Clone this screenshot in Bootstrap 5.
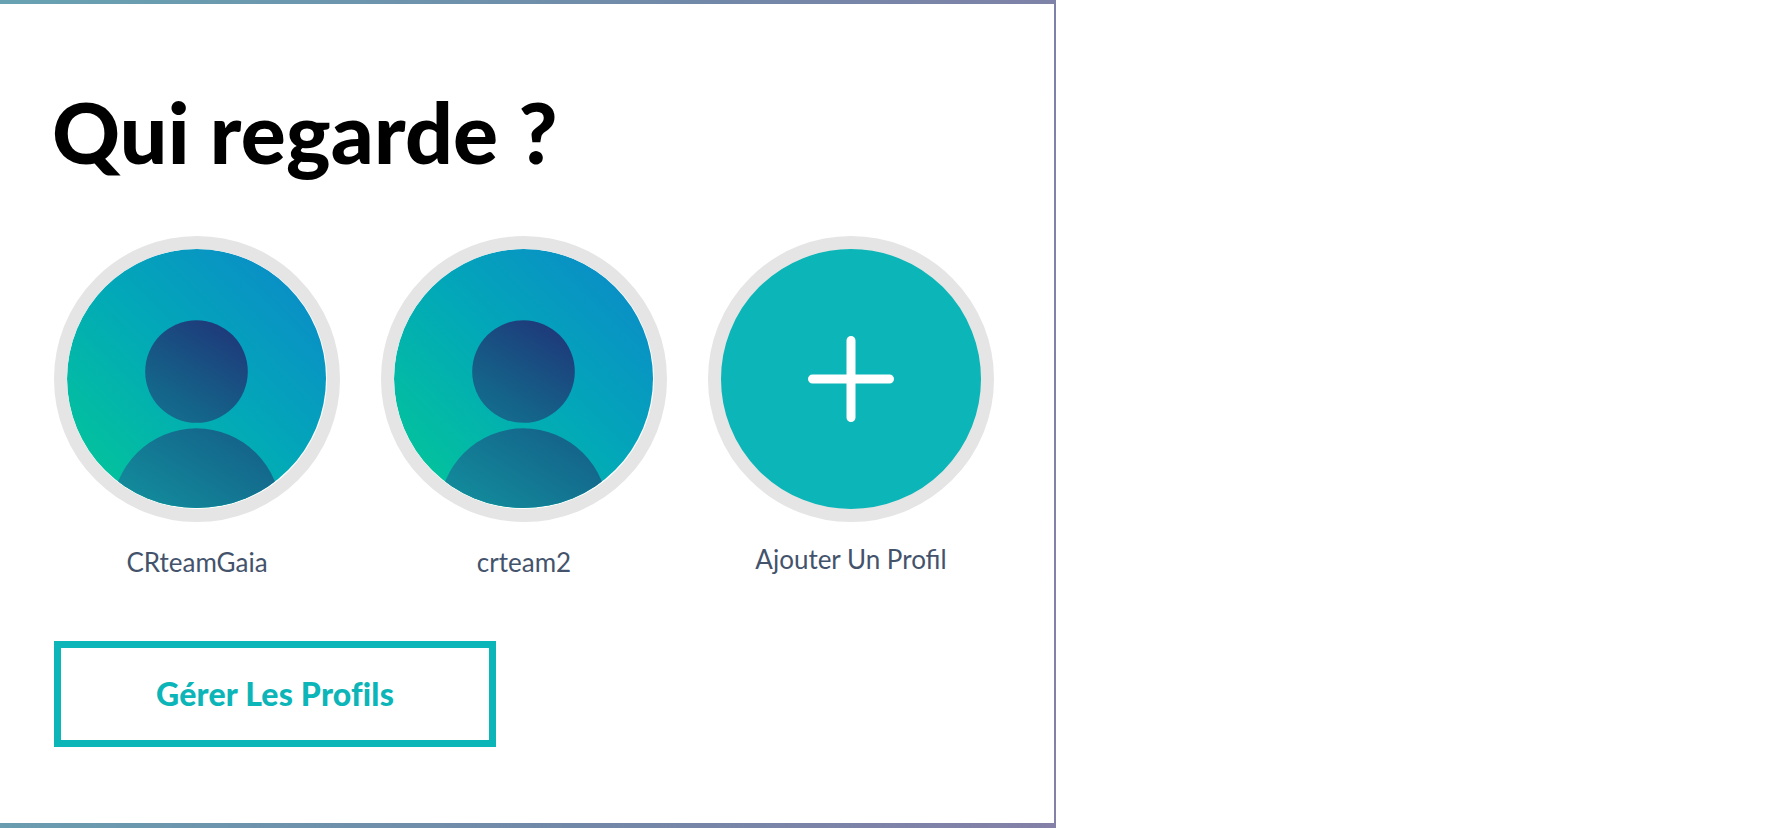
<!DOCTYPE html>
<html lang="fr">
<head>
<meta charset="utf-8">
<title>Qui regarde ?</title>
<link href="https://cdn.jsdelivr.net/npm/bootstrap@5.3.0/dist/css/bootstrap.min.css" rel="stylesheet">
<style>
html, body { height: 100%; background: #fff; }
body { font-family: "Lato", "Liberation Sans", sans-serif; }
.who-panel {
  width: 1056px; height: 828px; background: #fff;
  border-style: solid; border-width: 4.5px 2px 5px 0;
  border-image: linear-gradient(100deg, #68a2b2 0%, #7288a8 60%, #8480a8 100%) 1;
  padding: 83px 0 0 54px;
}
.who-title { font-size: 84px; font-weight: 900; color: #000; line-height: 90px; margin: 0 0 59px -2px; letter-spacing: .2px; }
.who-row { gap: 41px; }
.who-item { width: 286px; }
.who-ring { width: 286px; height: 286px; border: 13.5px solid #e5e5e5; border-radius: 50%; overflow: hidden; }
.who-ring svg { display: block; width: 259px; height: 259px; }
.who-add { background: #0cb5b7; }
.who-add svg { width: 86px; height: 86px; }
.who-label { font-size: 26px; line-height: 32px; color: #44536c; margin-top: 24px; white-space: nowrap; }
.who-label-add { margin-top: 21px; }
.who-manage {
  width: 442px; height: 106px; margin-top: 63px; border: 7.5px solid #0cb5b7; border-radius: 0;
  background: #fff; color: #0cb5b7; font-size: 32px; font-weight: 900; line-height: 1; letter-spacing: .2px;
}
.who-manage:hover { background: #fff; color: #0cb5b7; border-color: #0cb5b7; }
</style>
</head>
<body>
<main class="who-panel">
  <h1 class="who-title">Qui regarde ?</h1>
  <div class="d-flex who-row">
    <div class="who-item text-center">
      <div class="who-ring">
        <svg viewBox="0 0 260 260" aria-hidden="true">
          <defs>
            <linearGradient id="bg1" gradientUnits="userSpaceOnUse" x1="40" y1="220" x2="225" y2="30"><stop offset="0" stop-color="#03c09f"/><stop offset=".5" stop-color="#02a8b8"/><stop offset="1" stop-color="#0a8fc6"/></linearGradient>
            <linearGradient id="fg1" gradientUnits="userSpaceOnUse" x1="60" y1="260" x2="175" y2="75"><stop offset="0" stop-color="#128f9e"/><stop offset=".55" stop-color="#14648a"/><stop offset="1" stop-color="#1f3578"/></linearGradient>
            <clipPath id="cp1"><circle cx="130" cy="130" r="130"/></clipPath>
          </defs>
          <g clip-path="url(#cp1)"><rect width="260" height="260" fill="url(#bg1)"/><circle cx="130" cy="123" r="51.5" fill="url(#fg1)"/><circle cx="130" cy="264.6" r="84.6" fill="url(#fg1)"/></g>
        </svg>
      </div>
      <div class="who-label">CRteamGaia</div>
    </div>
    <div class="who-item text-center">
      <div class="who-ring">
        <svg viewBox="0 0 260 260" aria-hidden="true">
          <g clip-path="url(#cp1)"><rect width="260" height="260" fill="url(#bg1)"/><circle cx="130" cy="123" r="51.5" fill="url(#fg1)"/><circle cx="130" cy="264.6" r="84.6" fill="url(#fg1)"/></g>
        </svg>
      </div>
      <div class="who-label">crteam2</div>
    </div>
    <div class="who-item text-center">
      <div class="who-ring who-add d-flex align-items-center justify-content-center">
        <svg viewBox="0 0 86 86" aria-hidden="true"><path d="M43 4.5v77M4.5 43h77" stroke="#fff" stroke-width="9" stroke-linecap="round" fill="none"/></svg>
      </div>
      <div class="who-label who-label-add">Ajouter Un Profil</div>
    </div>
  </div>
  <button type="button" class="btn who-manage d-block">Gérer Les Profils</button>
</main>
<script src="https://cdn.jsdelivr.net/npm/bootstrap@5.3.0/dist/js/bootstrap.bundle.min.js"></script>
</body>
</html>
